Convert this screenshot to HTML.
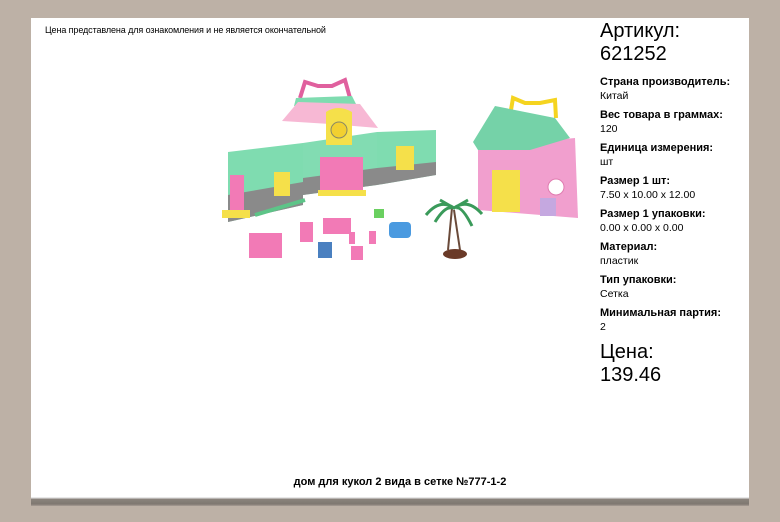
<!DOCTYPE html>
<html><head><meta charset="utf-8"><style>
body{margin:0;width:780px;height:522px;background:#bdb1a6;position:relative;overflow:hidden;font-family:"Liberation Sans",sans-serif;color:#000}
.card{position:absolute;left:31px;top:18px;width:718px;height:479px;background:#fff}
.shadow{position:absolute;left:31px;top:497px;width:718px;height:9px;background:linear-gradient(#e8e8e8 0,#e8e8e8 1px,#8a837c 2px,#7f7871 7px,#a89e95 9px)}
.t{position:absolute;white-space:nowrap}
.cap{left:45px;top:25px;font-size:9px;letter-spacing:-.1px}
.big{left:600px;font-size:20px;line-height:23px}
.l{left:600px;font-size:11px;font-weight:bold}
.v{left:600px;font-size:10.5px}
.title{left:0;width:800px;text-align:center;top:476px;font-size:11px;font-weight:bold}
</style></head><body>
<div class="card"></div>
<div class="shadow"></div>
<svg style="position:absolute;left:0;top:0" width="780" height="522">
<path d="M300 98 L305 82 L318 86 L332 86 L345 80 L350 98" fill="none" stroke="#e0609e" stroke-width="4"/>
<polygon points="296,98 352,96 356,104 294,106" fill="#7fdcb0"/>
<polygon points="282,121 298,102 360,104 378,128 330,124" fill="#f7b8d4"/>
<polygon points="228,152 303,143 303,205 228,222" fill="#7fdcb0"/>
<polygon points="303,143 377,132 377,185 303,195" fill="#82dcb2"/>
<polygon points="377,132 436,130 436,175 377,185" fill="#7fdcb0"/>
<polygon points="228,195 303,182 303,205 228,222" fill="#8a8a8a"/>
<polygon points="303,178 377,168 377,185 303,195" fill="#8a8a8a"/>
<polygon points="377,168 436,162 436,175 377,185" fill="#8a8a8a"/>
<rect x="230" y="175" width="14" height="40" fill="#f27ab6"/>
<rect x="222" y="210" width="28" height="8" fill="#f5e04a"/>
<path d="M326 112 Q338 104 352 112 L352 145 L326 145Z" fill="#f5e04a"/>
<circle cx="339" cy="130" r="8" fill="#f2d030" stroke="#886" stroke-width="1"/>
<rect x="320" y="157" width="43" height="36" fill="#f27ab6"/>
<rect x="318" y="190" width="48" height="6" fill="#f5e04a"/>
<rect x="274" y="172" width="16" height="24" fill="#f5e04a"/>
<rect x="396" y="146" width="18" height="24" fill="#f5e04a"/>
<path d="M255 215 L305 200" stroke="#5dc488" stroke-width="4"/>
<path d="M511 110 L513 98 L525 103 L540 103 L555 100 L556 118" fill="none" stroke="#f5d420" stroke-width="4"/>
<polygon points="478,147 575,138 578,218 478,210" fill="#f19fce"/>
<polygon points="473,142 495,106 555,118 570,138 530,150 478,150" fill="#75d2a8"/>
<rect x="492" y="170" width="28" height="42" fill="#f5e04a"/>
<circle cx="556" cy="187" r="8" fill="#fff" stroke="#e07cb0"/>
<rect x="540" y="198" width="16" height="18" fill="#c5a8e0"/>
<rect x="249" y="233" width="33" height="25" fill="#f27ab6"/>
<rect x="300" y="222" width="13" height="20" fill="#f27ab6"/>
<rect x="323" y="218" width="28" height="16" fill="#f27ab6"/>
<rect x="318" y="242" width="14" height="16" fill="#4a80c0"/>
<rect x="351" y="246" width="12" height="14" fill="#f27ab6"/>
<rect x="349" y="232" width="6" height="12" fill="#f27ab6"/>
<rect x="369" y="231" width="7" height="13" fill="#f27ab6"/>
<rect x="374" y="209" width="10" height="9" fill="#6ad060"/>
<rect x="389" y="222" width="22" height="16" rx="4" fill="#4a9ae0"/>
<path d="M452 208 L448 250 M454 210 L460 250" stroke="#6a4a3a" stroke-width="2"/>
<ellipse cx="455" cy="254" rx="12" ry="5" fill="#6a3a28"/>
<path d="M426 215 Q440 198 454 208 Q468 198 482 214 M435 222 Q445 206 452 208 M472 226 Q462 206 456 208 M440 200 L454 208 L468 200" stroke="#3a9a5a" stroke-width="3" fill="none"/>
</svg>
<div class="t cap">Цена представлена для ознакомления и не является окончательной</div>
<div class="t big" style="top:20px">Артикул:<br>621252</div>
<div class="t l" style="top:76px">Страна производитель:</div><div class="t v" style="top:90px">Китай</div>
<div class="t l" style="top:109px">Вес товара в граммах:</div><div class="t v" style="top:123px">120</div>
<div class="t l" style="top:142px">Единица измерения:</div><div class="t v" style="top:156px">шт</div>
<div class="t l" style="top:175px">Размер 1 шт:</div><div class="t v" style="top:189px">7.50 x 10.00 x 12.00</div>
<div class="t l" style="top:208px">Размер 1 упаковки:</div><div class="t v" style="top:222px">0.00 x 0.00 x 0.00</div>
<div class="t l" style="top:241px">Материал:</div><div class="t v" style="top:255px">пластик</div>
<div class="t l" style="top:274px">Тип упаковки:</div><div class="t v" style="top:288px">Сетка</div>
<div class="t l" style="top:307px">Минимальная партия:</div><div class="t v" style="top:321px">2</div>
<div class="t big" style="top:341px">Цена:<br>139.46</div>
<div class="t title">дом для кукол 2 вида в сетке №777-1-2</div>
</body></html>
